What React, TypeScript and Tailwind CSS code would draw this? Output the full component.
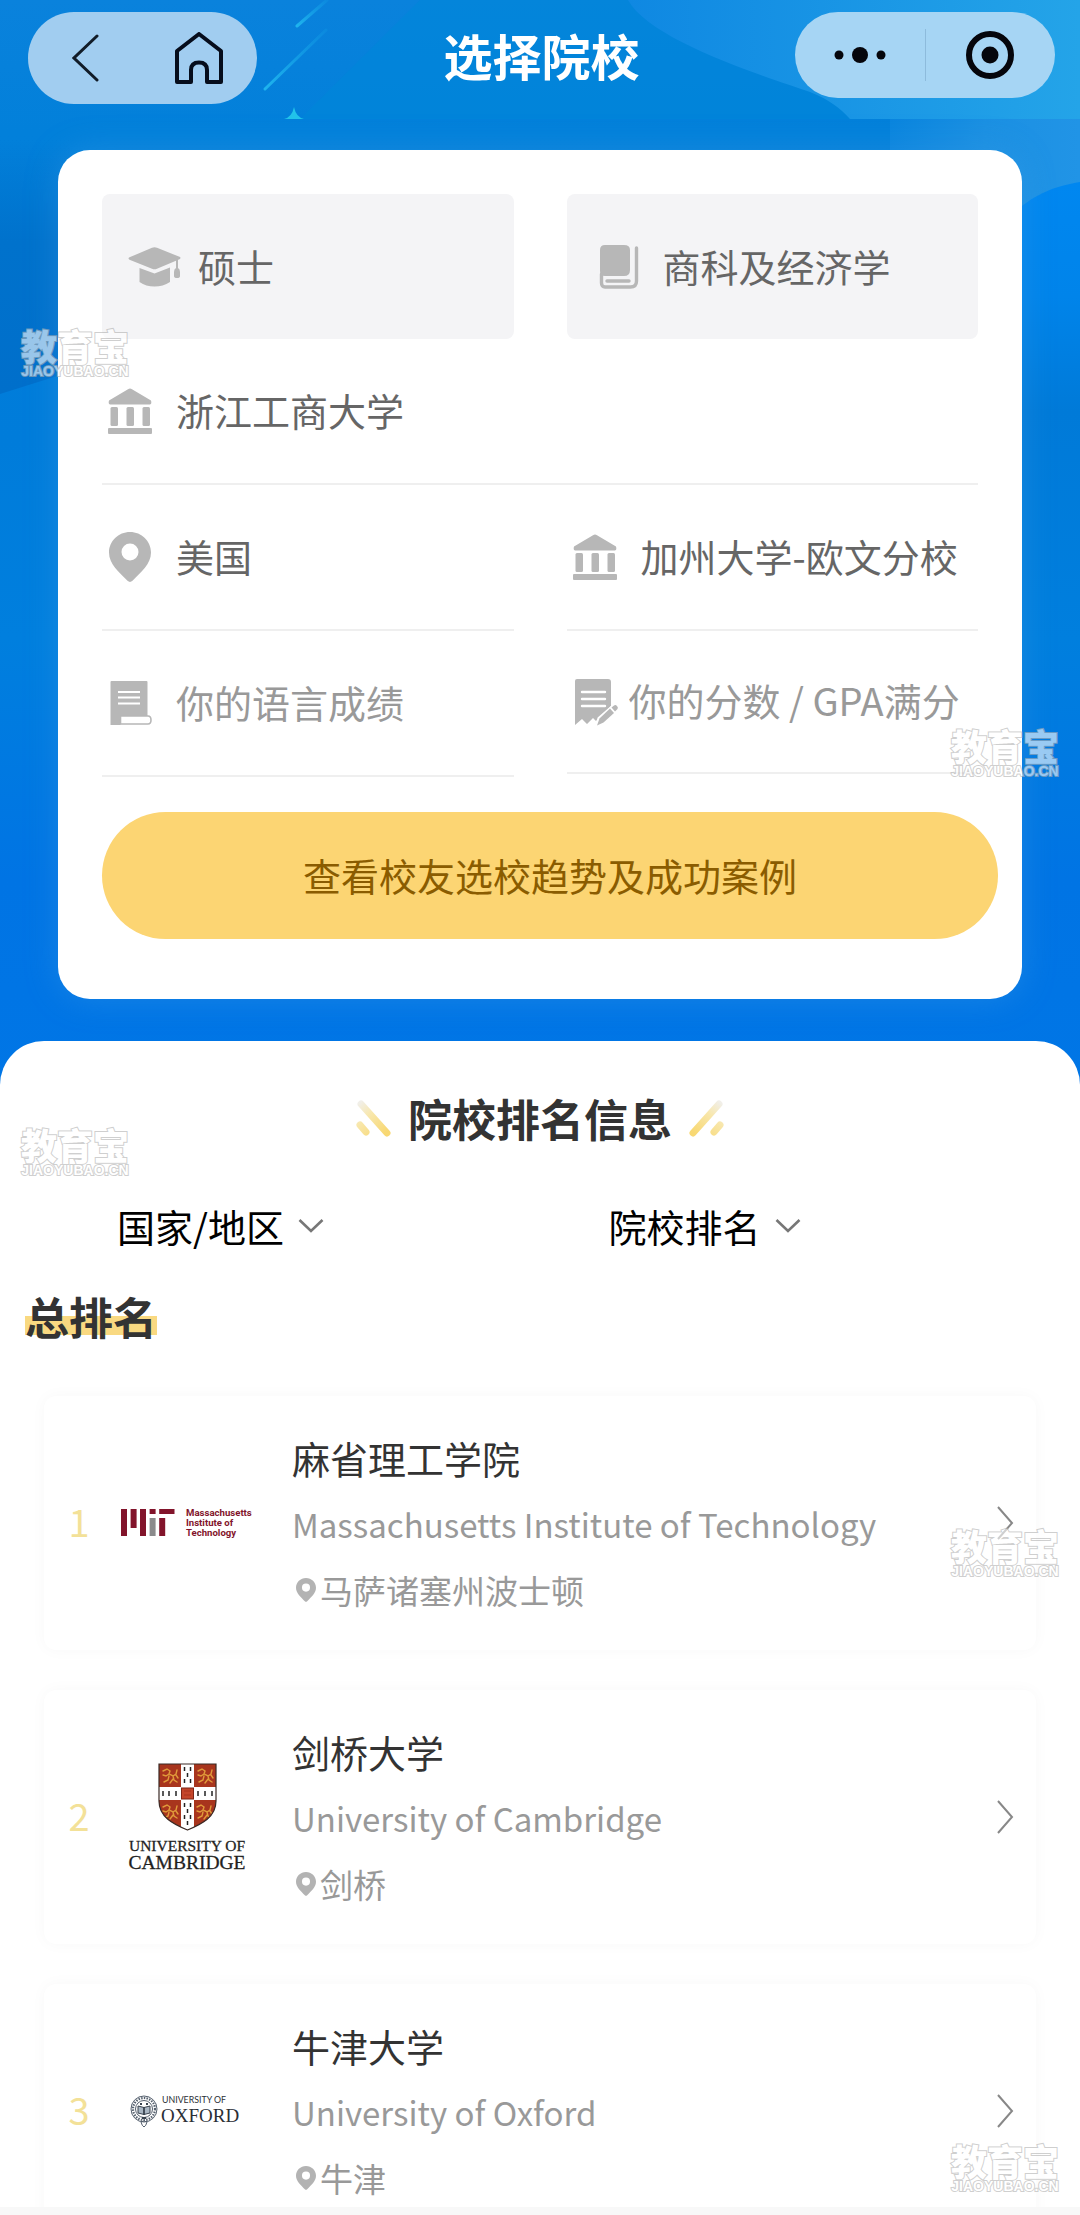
import React, { useState } from 'react';

interface School {
  rank: number;
  name: string;
  englishName: string;
  city: string;
  logo: React.ReactNode;
}

const PinIcon: React.FC<{ className?: string }> = ({ className }) => (
  <svg className={className} viewBox="0 0 42 50" fill="currentColor" aria-hidden="true">
    <path
      fillRule="evenodd"
      d="M21 0C9.400 0 0 9.200 0 20.500C0 32 10 40 18.500 48.800Q21 51 23.500 48.800C32 40 42 32 42 20.500C42 9.200 32.600 0 21 0ZM21 11.500A8.500 8.500 0 1 1 21 28.500A8.500 8.500 0 1 1 21 11.500Z"
    />
  </svg>
);

const CapIcon = () => (
  <svg className="w-[53px] h-10" viewBox="0 0 53 40" fill="currentColor" aria-hidden="true">
    <path d="M24 .8Q26.500 -.2 29 .8L51.500 9.800Q53.500 11 51.500 12.200L29 21.800Q26.500 22.800 24 21.800L1.500 12.700Q-.5 11.500 1.500 10.300Z" />
    <path d="M11.500 21L26.500 26.500L42 20.500V35Q35 39.500 26.500 39.500T11.500 35Z" />
    <path d="M48 12h2v9q2 1 2 4v4q0 2-3 2t-3-2v-4q0-3 2-4z" />
  </svg>
);

const BookIcon = () => (
  <svg className="w-[53px] h-11" viewBox="0 0 53 44" fill="none" stroke="currentColor" aria-hidden="true">
    <path d="M12 0H31Q37 0 37 5V25Q37 31 31 31H12Q7 31 7 26V5Q7 0 12 0Z" fill="currentColor" stroke="none" />
    <path d="M43.500 3V36Q43.500 42 37.500 42H12Q8.500 42 8.500 38V29" strokeWidth="3.400" strokeLinecap="round" />
    <path d="M14 36H36" strokeWidth="3.400" strokeLinecap="round" />
  </svg>
);

const BankIcon = () => (
  <svg className="w-11 h-[46px]" viewBox="0 0 44 46" fill="currentColor" aria-hidden="true">
    <path d="M20 1.200Q22 0 24 1.200L43 12.500Q44 16 42 16.500H2Q0 16 1 12.500Z" />
    <rect x="2.500" y="19" width="7.500" height="19" rx="1.500" />
    <rect x="18.500" y="19" width="7.500" height="19" rx="1.500" />
    <rect x="34.500" y="19" width="7.500" height="19" rx="1.500" />
    <rect y="40" width="44" height="6" rx="1" />
  </svg>
);

const ScoreIcon = () => (
  <svg className="w-11 h-[46px]" viewBox="0 0 44 46" fill="none" aria-hidden="true">
    <path d="M3.500 1H38.500Q39.500 1 39.500 2V45H2.500V2Q2.500 1 3.500 1Z" fill="currentColor" />
    <rect x="12.500" y="36" width="31" height="9" fill="#fff" />
    <path d="M12.500 36H40Q43 36 43 40Q43 44 40 44H12.500Z" fill="#fff" stroke="currentColor" strokeWidth="1.600" />
    <path d="M10 12H32M10 17.500H32M10 23.500H32" stroke="#fff" strokeWidth="2.200" />
  </svg>
);

const GpaIcon = () => (
  <svg className="w-[46px] h-12" viewBox="0 0 46 48" fill="none" aria-hidden="true">
    <path
      d="M4 1H35Q38 1 38 4V28L23 43L20 40L14 46L9 41L2 47V3Q2 1 4 1Z"
      fill="currentColor"
    />
    <path d="M9 14H32M9 21H32M9 28H32" stroke="#fff" strokeWidth="2.400" strokeLinecap="round" />
    <path d="M23 48L25.500 40L41 26.500L46 31.500L31 45Z" fill="#fff" stroke="#fff" strokeWidth="2" />
    <path d="M24 47.500L26.500 40.500L37 30.500L41 35L30.500 44.500Z" fill="currentColor" />
    <path d="M38.500 29.500L41 27.500Q42.500 26.500 44 28T44.500 31L42 33.500Z" fill="currentColor" />
  </svg>
);

const MitLogo = () => (
  <svg className="w-[132px] h-[30px] overflow-visible" viewBox="0 0 132 30" role="img" aria-label="MIT">
    <g fill="#82142b">
      <rect x="0" y="1" width="6" height="27" />
      <rect x="9.600" y="1" width="6" height="19" />
      <rect x="19" y="1" width="6" height="27" />
      <rect x="28.600" y="1" width="6" height="5" />
      <rect x="38.200" y="1" width="15.300" height="5" />
      <rect x="38.200" y="10" width="6" height="18" />
    </g>
    <rect x="28.600" y="10" width="6" height="18" fill="#8b8b8c" />
    <g fill="#82142b" fontFamily="Roboto, 'Liberation Sans', sans-serif" fontWeight="700" fontSize="9.600">
      <text x="65" y="8">Massachusetts</text>
      <text x="65" y="18">Institute of</text>
      <text x="65" y="28">Technology</text>
    </g>
  </svg>
);

// one of the four red quarters of the shield, with its gold lion
const Lion: React.FC<{ x: number; y: number }> = ({ x, y }) => (
  <path
    transform={`translate(${x} ${y})`}
    d="M2 4l4-2 3 2-1 3 4 2 3-2 1-4M8 7l-3 2-3-1M8 9l-1 4-4 2M12 9l1 4 3 2M12 12l-3 4M15 8l2 3"
    fill="none"
    stroke="#e09a3a"
    strokeWidth="1.400"
    strokeLinecap="round"
  />
);

const CambridgeLogo = () => (
  <svg className="w-[130px] h-[108px]" viewBox="0 0 130 108" role="img" aria-label="University of Cambridge">
    <clipPath id="shield">
      <path d="M37 1H94V38C94 54 80 61 65.500 67C51 61 37 54 37 38Z" />
    </clipPath>
    <g clipPath="url(#shield)">
      <rect x="36" width="60" height="70" fill="#a8351d" />
      <rect x="59" width="13" height="70" fill="#fff" />
      <rect x="36" y="24" width="60" height="13" fill="#fff" />
      <rect x="59.500" y="25" width="12" height="11" fill="#c4452a" stroke="#7c2415" />
      <path d="M62 28h7M62 32h7" stroke="#a8351d" />
      <Lion x={39} y={4} />
      <Lion x={74} y={4} />
      <Lion x={39} y={40} />
      <Lion x={73} y={40} />
      <path
        d="M62.500 4v4M68.500 4v4M65.500 10v4M62.500 16v4M68.500 16v4M62.500 40v4M68.500 40v4M65.500 46v4M62.500 52v4M68.500 52v4M65.500 58v4M41 28v5M47 28v5M54 28v5M76 28v5M83 28v5M90 28v5"
        stroke="#222"
        strokeWidth="1.500"
      />
    </g>
    <path d="M37 1H94V38C94 54 80 61 65.500 67C51 61 37 54 37 38Z" fill="none" stroke="#3a2a26" strokeWidth="1.200" />
    <g fill="#1f1f1f" fontFamily="'Liberation Serif', serif" textAnchor="middle" stroke="#1f1f1f" strokeWidth=".3">
      <text x="65" y="88" fontSize="15.500">UNIVERSITY OF</text>
      <text x="65" y="106" fontSize="19.500">CAMBRIDGE</text>
    </g>
  </svg>
);

const OxfordLogo = () => (
  <svg className="w-[130px] h-9 overflow-visible" viewBox="0 0 130 36" role="img" aria-label="University of Oxford">
    <g fill="none" stroke="#55606e">
      <circle cx="22" cy="16" r="13" />
      <circle cx="22" cy="16" r="11" strokeWidth="2.200" strokeDasharray="1.500 1.200" />
      <circle cx="22" cy="16" r="8.500" />
      <path d="M19 29q3-2 6 0q-1 4-3 5q-2-1-3-5z" />
    </g>
    <path d="M16 13l6 1.500 6-1.500v7l-6 1.500-6-1.500z" fill="#a9b6c3" stroke="#39434f" />
    <path d="M22 14v8M18 11h2M24 11h2M20 25h4" stroke="#39434f" strokeWidth="1.800" />
    <g fill="#2b2f36">
      <text x="40" y="10" fontSize="8.800" fontFamily="Lato, sans-serif">UNIVERSITY OF</text>
      <text x="39" y="29" fontSize="19" fontFamily="'Liberation Serif', serif">OXFORD</text>
    </g>
  </svg>
);

const schools: School[] = [
  {
    rank: 1,
    name: '麻省理工学院',
    englishName: 'Massachusetts Institute of Technology',
    city: '马萨诸塞州波士顿',
    logo: <MitLogo />,
  },
  {
    rank: 2,
    name: '剑桥大学',
    englishName: 'University of Cambridge',
    city: '剑桥',
    logo: <CambridgeLogo />,
  },
  {
    rank: 3,
    name: '牛津大学',
    englishName: 'University of Oxford',
    city: '牛津',
    logo: <OxfordLogo />,
  },
];

const Backdrop = () => (
  <svg
    className="absolute inset-x-0 top-0 w-full h-[1100px]"
    viewBox="0 0 1080 1100"
    preserveAspectRatio="none"
    aria-hidden="true"
  >
    <defs>
      <linearGradient id="base" x1="0" y1="0" x2="0" y2="1">
        <stop offset="0" stopColor="#0a82dc" />
        <stop offset=".12" stopColor="#0280da" />
        <stop offset=".4" stopColor="#007cda" />
        <stop offset=".58" stopColor="#007fde" />
        <stop offset=".8" stopColor="#0074e4" />
        <stop offset="1" stopColor="#0076e6" />
      </linearGradient>
      <linearGradient id="shade" x1="0" y1="0" x2="0" y2="1">
        <stop offset="0" stopColor="#0072cc" stopOpacity="0" />
        <stop offset=".4" stopColor="#0072cc" />
        <stop offset="1" stopColor="#006fcb" />
      </linearGradient>
      <linearGradient id="wave" x1="0" y1="0" x2="1" y2="0">
        <stop offset="0" stopColor="#0f88e2" />
        <stop offset="1" stopColor="#24a4e8" />
      </linearGradient>
      <linearGradient id="side" x1="0" y1="0" x2="1" y2="0">
        <stop offset="0" stopColor="#0a85de" />
        <stop offset=".5" stopColor="#1b90e2" />
        <stop offset="1" stopColor="#2194e6" />
      </linearGradient>
      <linearGradient id="orb" x1="0" y1="0" x2="0" y2="1">
        <stop offset="0" stopColor="#0087f0" />
        <stop offset=".25" stopColor="#0084ea" />
        <stop offset=".5" stopColor="#007ad8" />
        <stop offset="1" stopColor="#007fde" />
      </linearGradient>
      <linearGradient id="trail" x1="1" y1="0" x2="0" y2="1">
        <stop offset="0" stopColor="#16a9ea" stopOpacity=".2" />
        <stop offset="1" stopColor="#1fb4ee" />
      </linearGradient>
    </defs>
    <rect width="1080" height="1100" fill="url(#base)" />
    <path d="M420 0H660L860 119H300Z" fill="#0087d8" opacity=".6" />
    <path d="M628 0C650 40 760 75 810 92C830 100 840 108 850 119H1080V0Z" fill="url(#wave)" />
    <path d="M890 119H1080V300H890Z" fill="url(#side)" />
    <path d="M1080 182C1045 188 1020 200 990 240V640H1080Z" fill="url(#orb)" />
    <path d="M0 140H70V372L0 394Z" fill="url(#shade)" />
    <path d="M327 0L297 26" stroke="url(#trail)" strokeWidth="3" strokeLinecap="round" />
    <path d="M326 30L265 89" stroke="url(#trail)" strokeWidth="3" strokeLinecap="round" />
    <path d="M294 107Q296 117 304 119H284Q292 117 294 107Z" fill="#22c3ea" />
  </svg>
);

const Watermark: React.FC<{ className: string }> = ({ className }) => (
  <div
    className={`absolute z-10 flex flex-col items-center w-[110px] font-black text-white opacity-60 pointer-events-none [-webkit-text-stroke:2px_#b0b0b0] [paint-order:stroke_fill] ${className}`}
    aria-hidden="true"
  >
    <span className="text-[36px] leading-9">教育宝</span>
    <span className="font-['Liberation_Sans',sans-serif] text-[14px] leading-4">JIAOYUBAO.CN</span>
  </div>
);

interface FieldProps {
  icon: React.ReactNode;
  children: React.ReactNode;
  className?: string;
}

const PickerRow: React.FC<FieldProps> = ({ icon, children, className = '' }) => (
  <button
    type="button"
    className={`flex items-center gap-6 h-[146px] pl-1.5 border-b-2 border-[#efefef] text-left whitespace-nowrap ${className}`}
  >
    <span className="flex-shrink-0 flex justify-center w-11 text-[#b7b7b7]">{icon}</span>
    <span className="pb-0.5">{children}</span>
  </button>
);

const PickerBox: React.FC<FieldProps> = ({ icon, children }) => (
  <button
    type="button"
    className="flex items-center gap-[17px] h-[145px] pl-[26px] rounded-lg bg-[#f4f4f6] text-left whitespace-nowrap"
  >
    <span className="flex-shrink-0 text-[#b7b7b7]">{icon}</span>
    <span className="pb-0.5">{children}</span>
  </button>
);

const Sparks: React.FC<{ className?: string }> = ({ className = '' }) => (
  <svg className={`w-9 h-[38px] ${className}`} viewBox="0 0 36 38" aria-hidden="true">
    <defs>
      <linearGradient id="spark" gradientUnits="userSpaceOnUse" x1="4" y1="4" x2="30" y2="34">
        <stop offset="0" stopColor="#f1efe9" />
        <stop offset=".4" stopColor="#f8e7ac" />
        <stop offset="1" stopColor="#f8d873" />
      </linearGradient>
    </defs>
    <path d="M6 5L32 34" stroke="url(#spark)" strokeWidth="7" strokeLinecap="round" />
    <path d="M5 26L11 33" stroke="url(#spark)" strokeWidth="7" strokeLinecap="round" />
  </svg>
);

const FilterSelect: React.FC<{ label: string; options: string[] }> = ({ label, options }) => {
  const [value, setValue] = useState(label);

  return (
    <div className="flex items-center gap-3.5">
      <select
        aria-label={label}
        value={value}
        onChange={(e) => setValue(e.target.value)}
        className="appearance-none field-sizing-content h-14 bg-transparent text-[38px] leading-[56px] text-black focus:outline-none"
      >
        {[label, ...options].map((option) => (
          <option key={option}>{option}</option>
        ))}
      </select>
      <svg className="w-[26px] h-4" viewBox="0 0 26 16" fill="none" stroke="#777" strokeWidth="2.600" aria-hidden="true">
        <path d="M1.500 2L13 13L24.500 2" />
      </svg>
    </div>
  );
};

const SchoolCard: React.FC<{ school: School }> = ({ school }) => (
  <li>
    <a
      href={`#school-${school.rank}`}
      className="flex items-center pl-6 pr-[22px] rounded-xl bg-white shadow-[0_0_16px_rgba(0,0,0,0.03)]"
    >
      <span className="w-[22px] pb-1 text-center text-[38px] leading-[54px] text-[#f3e198]">{school.rank}</span>
      <span className="flex-shrink-0 flex justify-center w-[130px] ml-8">{school.logo}</span>
      <div className="flex-1 min-w-0 ml-10 pt-[29px] pb-[27px]">
        <h3 className="text-[38px] leading-[66px] text-[#333]">{school.name}</h3>
        <p className="text-[33px] leading-[66px] text-[#999] whitespace-nowrap">{school.englishName}</p>
        <p className="flex items-center gap-1 pl-1 text-[33px] leading-[66px] text-[#999]">
          <PinIcon className="w-5 h-6 text-[#b3b3b3]" />
          {school.city}
        </p>
      </div>
      <svg className="w-[18px] h-9" viewBox="0 0 18 36" fill="none" stroke="#888" strokeWidth="2" aria-hidden="true">
        <path d="M2 2L16 18L2 34" />
      </svg>
    </a>
  </li>
);

export default function App() {
  const [language, setLanguage] = useState('');
  const [gpa, setGpa] = useState('');

  return (
    <div className="flex flex-col h-screen font-['Noto_Sans_CJK_SC',sans-serif]">
      <main className="relative flex-1 overflow-y-auto bg-white [scrollbar-width:none]">
        <Backdrop />
        <Watermark className="left-5 top-[327px]" />
        <Watermark className="right-5 top-[727px]" />
        <Watermark className="left-5 top-[1126px]" />
        <Watermark className="right-5 top-[1527px]" />
        <Watermark className="right-5 top-[2142px]" />

        {/* Header */}
        <header className="relative grid grid-cols-[1fr_auto_1fr] items-start pt-3 pl-7 pr-[25px]">
          <div className="flex items-center justify-between w-[229px] h-[92px] pl-11 pr-[34px] rounded-full bg-[#a1cdf0]">
            <button type="button" aria-label="返回">
              <svg className="w-7 h-12" viewBox="0 0 28 48" fill="none" stroke="#111c28" strokeWidth="3" strokeLinecap="round">
                <path d="M25 2L2 24L25 46" />
              </svg>
            </button>
            <button type="button" aria-label="首页">
              <svg className="w-12 h-[52px]" viewBox="0 0 48 52" fill="none" stroke="#060d1c" strokeWidth="4" strokeLinejoin="round">
                <path d="M24 2L46 19V50H32V38Q32 30.500 24 30.500T16 38V50H2V19Z" />
              </svg>
            </button>
          </div>
          <h1 className="text-[49px] leading-[86px] font-bold text-white">选择院校</h1>
          <div className="flex items-center justify-self-end w-[260px] h-[86px] rounded-full bg-[#a6d5f4]">
            <button type="button" aria-label="更多" className="flex-1 flex justify-center">
              <svg className="w-[52px] h-[18px]" viewBox="0 0 52 18" fill="#05060c">
                <circle cx="5" cy="9" r="4.500" />
                <circle cx="26" cy="9" r="8" />
                <circle cx="47" cy="9" r="4.500" />
              </svg>
            </button>
            <span className="w-px h-[52px] bg-[#8dbbdc]" />
            <button type="button" aria-label="关闭" className="flex-1 flex justify-center">
              <svg className="w-12 h-12" viewBox="0 0 48 48" fill="none">
                <circle cx="24" cy="24" r="21" stroke="#05060c" strokeWidth="6" />
                <circle cx="24" cy="24" r="8.500" fill="#05060c" />
              </svg>
            </button>
          </div>
        </header>

        {/* School form */}
        <form
          onSubmit={(e) => e.preventDefault()}
          className="relative mx-[58px] mt-[46px] p-11 pb-[60px] rounded-[32px] bg-white shadow-[0_0_32px_rgba(60,155,230,0.4)] text-[38px] leading-[56px] text-[#666]"
        >
          <div className="grid grid-cols-2 gap-x-[53px]">
            <PickerBox icon={<CapIcon />}>硕士</PickerBox>
            <PickerBox icon={<BookIcon />}>商科及经济学</PickerBox>
            <PickerRow icon={<BankIcon />} className="col-span-2">浙江工商大学</PickerRow>
            <PickerRow icon={<PinIcon className="w-[42px] h-[50px]" />}>美国</PickerRow>
            <PickerRow icon={<BankIcon />}>加州大学-欧文分校</PickerRow>
            <label className="flex items-center gap-6 h-[146px] pl-1.5 border-b-2 border-[#efefef] text-[#b7b7b7]">
              <ScoreIcon />
              <input
                type="text"
                aria-label="你的语言成绩"
                placeholder="你的语言成绩"
                value={language}
                onChange={(e) => setLanguage(e.target.value)}
                className="flex-1 min-w-0 pb-0.5 text-[#666] placeholder:text-[#999] focus:outline-none"
              />
            </label>
            <label className="flex items-center gap-2.5 h-[143px] pl-1.5 border-b-2 border-[#efefef] text-[#b7b7b7]">
              <GpaIcon />
              <input
                type="text"
                aria-label="你的分数 / GPA满分"
                placeholder="你的分数 / GPA满分"
                value={gpa}
                onChange={(e) => setGpa(e.target.value)}
                className="flex-1 min-w-0 pb-1 text-[#666] placeholder:text-[#999] focus:outline-none"
              />
            </label>
          </div>
          <button
            type="submit"
            className="block w-[calc(100%+20px)] h-[127px] pb-0.5 mt-[35px] rounded-full bg-[#fcd573] text-[#8a5c00]"
          >
            查看校友选校趋势及成功案例
          </button>
        </form>

        {/* Ranking */}
        <section className="relative mt-[42px] pt-[47px] pb-10 rounded-t-[44px] bg-white">
          <h2 className="flex items-center justify-center gap-[17px] text-[44px] leading-[60px] font-bold text-[#333]">
            <Sparks />
            院校排名信息
            <Sparks className="-scale-x-100" />
          </h2>
          <div className="grid grid-cols-2 gap-5 mt-[50px] pl-[117px]">
            <FilterSelect label="国家/地区" options={['美国', '英国']} />
            <FilterSelect label="院校排名" options={['前50', '前100']} />
          </div>
          <h2 className="w-fit mt-[30px] ml-[25px] text-[44px] leading-[64px] font-bold text-[#333] bg-[linear-gradient(transparent_32px,#f9d981_32px,#f9d981_51px,transparent_51px)]">
            总排名
          </h2>
          <ul className="flex flex-col gap-10 mt-12 mx-11">
            {schools.map((school) => (
              <SchoolCard key={school.rank} school={school} />
            ))}
          </ul>
        </section>
      </main>
      <footer className="h-2 bg-[#f8f8f8]" />
    </div>
  );
}
